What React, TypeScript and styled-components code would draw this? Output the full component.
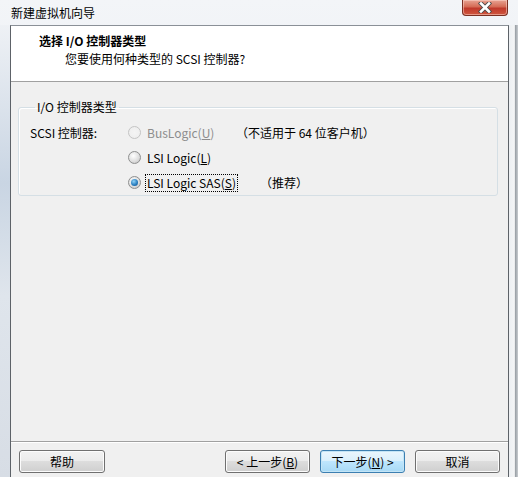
import React from 'react';
import styled, { createGlobalStyle, css } from 'styled-components';

const GlobalStyle = createGlobalStyle`
  html, body {
    margin: 0;
    padding: 0;
    width: 518px;
    height: 477px;
    overflow: hidden;
    background: #e9edf2;
  }
  body {
    font-family: "Noto Sans CJK SC", "Liberation Sans", sans-serif;
    font-size: 12px;
    color: #000;
  }
`;

const Window = styled.div`
  width: 518px;
  height: 477px;
  display: flex;
  flex-direction: column;
  background: linear-gradient(180deg, #f3f5f8 0%, #e8edf3 40%, #dde4ec 100%);
`;

const TitleBar = styled.div`
  height: 25px;
  display: flex;
  align-items: flex-start;
  padding-left: 11px;
  padding-right: 10px;
`;

const Title = styled.div`
  flex: 1;
  line-height: 26px;
  font-size: 12px;
  color: #000;
`;

const CloseButton = styled.div`
  width: 46px;
  height: 16px;
  box-sizing: border-box;
  border: 1px solid #7a2f22;
  border-top: none;
  border-radius: 0 0 4px 4px;
  background: linear-gradient(180deg, #e8a493 0%, #d56b55 45%, #c0392b 55%, #d0583f 100%);
  display: flex;
  align-items: center;
  justify-content: center;
  box-shadow: inset 0 0 0 1px rgba(255, 220, 210, 0.5);
`;

const Body = styled.div`
  flex: 1;
  display: flex;
  min-height: 0;
`;

const Edge = styled.div<{ $side: 'left' | 'right' }>`
  width: ${(p) => (p.$side === 'left' ? '10px' : '9px')};
  background: ${(p) =>
    p.$side === 'left'
      ? 'linear-gradient(180deg, #eef1f5 0%, #c9d5e3 35%, #dfe5ec 60%, #d7dde5 100%)'
      : 'linear-gradient(90deg, #eceff2 0%, #f4f5f6 60%, #9aa0a6 70%, #c8ccd0 100%)'};
`;

const Client = styled.div`
  flex: 1;
  display: flex;
  flex-direction: column;
  border-left: 1px solid #5d6268;
  border-right: 1px solid #5d6268;
  border-top: 1px solid #8a9097;
  background: #f0f0f0;
`;

const Header = styled.div`
  height: 56px;
  background: #fff;
  border-bottom: 1px solid #a0a0a0;
  padding: 6px 0 0 28px;
  box-sizing: border-box;
`;

const HeaderTitle = styled.div`
  font-weight: bold;
  font-size: 12px;
  line-height: 18px;
`;

const HeaderSub = styled.div`
  margin-left: 26px;
  line-height: 17px;
`;

const Content = styled.div`
  flex: 1;
  display: flex;
  flex-direction: column;
  padding: 18px 10px 0 7px;
`;

const Group = styled.fieldset`
  margin: 0;
  padding: 6px 0 8px 11px;
  border: 1px solid #d5dfe5;
  border-radius: 3px;
  box-shadow: inset 1px 1px 0 #fff;
  height: 96px;
  box-sizing: border-box;
`;

const Legend = styled.legend`
  padding: 0 2px;
  margin-left: 5px;
  line-height: 14px;
`;

const OptionGrid = styled.div`
  display: grid;
  grid-template-columns: 98px 108px auto;
  grid-auto-rows: 25px;
  align-items: center;
`;

const FieldLabel = styled.div``;

const Option = styled.div`
  display: flex;
  align-items: center;
  gap: 4px;
`;

const Radio = styled.span<{ $checked?: boolean; $disabled?: boolean }>`
  width: 13px;
  height: 13px;
  box-sizing: border-box;
  border-radius: 50%;
  border: 1px solid ${(p) => (p.$disabled ? '#c4c4c4' : '#8e8f8f')};
  background: ${(p) =>
    p.$disabled
      ? 'radial-gradient(circle at 50% 50%, #f4f4f4 0%, #ececec 100%)'
      : 'radial-gradient(circle at 40% 35%, #ffffff 0%, #dcdcdc 60%, #b9b9b9 100%)'};
  display: inline-flex;
  align-items: center;
  justify-content: center;
  flex: none;
  ${(p) =>
    p.$checked &&
    css`
      &::after {
        content: '';
        width: 7px;
        height: 7px;
        border-radius: 50%;
        background: radial-gradient(circle at 40% 35%, #8fd3f7 0%, #2b7fc0 55%, #0d4f8a 100%);
      }
    `}
`;

const OptionText = styled.span<{ $disabled?: boolean; $focused?: boolean }>`
  color: ${(p) => (p.$disabled ? '#8d8d8d' : '#000')};
  padding: 0 1px;
  line-height: 16px;
  border: 1px dotted ${(p) => (p.$focused ? '#000' : 'transparent')};
  white-space: nowrap;
`;

const Key = styled.span`
  text-decoration: underline;
`;

const Note = styled.div<{ $indent?: number }>`
  padding-left: ${(p) => p.$indent ?? 0}px;
  white-space: nowrap;
`;

const Spacer = styled.div`
  flex: 1;
`;

const Footer = styled.div`
  border-top: 1px solid #a0a0a0;
  box-shadow: inset 0 1px 0 #fff;
  height: 36px;
  display: flex;
  align-items: flex-start;
  padding: 8px 8px 0 8px;
  box-sizing: border-box;
`;

const Button = styled.button<{ $default?: boolean; $wide?: boolean }>`
  width: ${(p) => (p.$wide ? '86px' : '85px')};
  height: 23px;
  padding: 0;
  font-family: inherit;
  font-size: 12px;
  color: #000;
  border-radius: 3px;
  border: 1px solid ${(p) => (p.$default ? '#3c7fb1' : '#707070')};
  background: ${(p) =>
    p.$default
      ? 'linear-gradient(180deg, #eaf6fd 0%, #d9f0fc 49%, #bee6fd 50%, #a7d9f5 100%)'
      : 'linear-gradient(180deg, #f2f2f2 0%, #ebebeb 49%, #dddddd 50%, #cfcfcf 100%)'};
  box-shadow: inset 0 0 0 1px ${(p) => (p.$default ? '#c4e5f6' : '#fcfcfc')};
  display: flex;
  align-items: center;
  justify-content: center;
`;

const NavGroup = styled.div`
  margin-left: auto;
  display: flex;
  gap: 10px;
`;

export default function App() {
  return (
    <>
      <GlobalStyle />
      <Window>
        <TitleBar>
          <Title>新建虚拟机向导</Title>
          <CloseButton>
            <svg width="14" height="11" viewBox="0 0 14 11">
              <path
                d="M3 1.5 L11 9.5 M11 1.5 L3 9.5"
                stroke="#4a4a4a"
                strokeWidth="4.4"
                strokeLinecap="square"
              />
              <path
                d="M3 1.5 L11 9.5 M11 1.5 L3 9.5"
                stroke="#ffffff"
                strokeWidth="2.6"
                strokeLinecap="square"
              />
            </svg>
          </CloseButton>
        </TitleBar>
        <Body>
          <Edge $side="left" />
          <Client>
            <Header>
              <HeaderTitle>选择 I/O 控制器类型</HeaderTitle>
              <HeaderSub>您要使用何种类型的 SCSI 控制器?</HeaderSub>
            </Header>
            <Content>
              <Group>
                <Legend>I/O 控制器类型</Legend>
                <OptionGrid>
                  <FieldLabel>SCSI 控制器:</FieldLabel>
                  <Option>
                    <Radio $disabled />
                    <OptionText $disabled>
                      BusLogic(<Key>U</Key>)
                    </OptionText>
                  </Option>
                  <Note>（不适用于 64 位客户机）</Note>

                  <div />
                  <Option>
                    <Radio />
                    <OptionText>
                      LSI Logic(<Key>L</Key>)
                    </OptionText>
                  </Option>
                  <div />

                  <div />
                  <Option>
                    <Radio $checked />
                    <OptionText $focused>
                      LSI Logic SAS(<Key>S</Key>)
                    </OptionText>
                  </Option>
                  <Note $indent={24}>（推荐）</Note>
                </OptionGrid>
              </Group>
              <Spacer />
            </Content>
            <Footer>
              <Button $wide>帮助</Button>
              <NavGroup>
                <Button>
                  &lt; 上一步(<Key>B</Key>)
                </Button>
                <Button $default>
                  下一步(<Key>N</Key>) &gt;
                </Button>
                <Button>取消</Button>
              </NavGroup>
            </Footer>
          </Client>
          <Edge $side="right" />
        </Body>
      </Window>
    </>
  );
}
